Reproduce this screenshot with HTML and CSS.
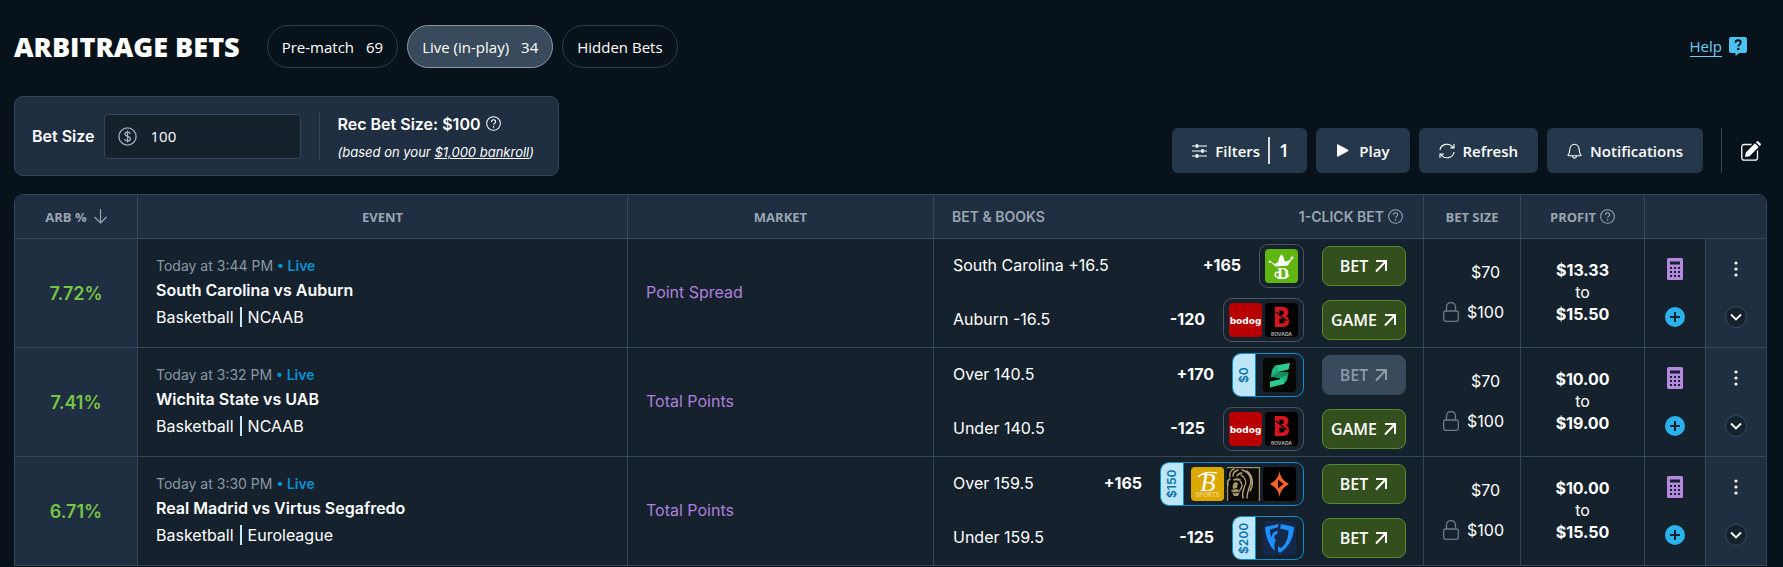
FILE: index.html
```html
<!DOCTYPE html>
<html lang="en">
<head>
    <meta charset="utf-8">
    <title>Arbitrage Bets</title>
    <meta name="viewport" content="width=device-width, initial-scale=1.0">
    <link rel="stylesheet" href="styles.css">
</head>
<body>
    <!-- Shared icons and sportsbook logos -->
    <svg class="sprite" aria-hidden="true">
        <symbol id="i-help" viewBox="0 0 16 16">
            <circle cx="8" cy="8" r="7.3" fill="none" stroke="currentColor" stroke-width="1.1"/>
            <path d="M5.8 6.3c0-3 4.5-2.9 4.5-.2 0 1.7-2.2 1.8-2.2 3.3" fill="none" stroke="currentColor" stroke-width="1.2"/>
            <circle cx="8.1" cy="11.6" r=".85" fill="currentColor"/>
        </symbol>
        <symbol id="i-open" viewBox="0 0 14 14">
            <path d="M2 2h10v10M12 2 2 12.5" fill="none" stroke="currentColor" stroke-width="2"/>
        </symbol>
        <symbol id="i-lock" viewBox="0 0 16 20">
            <rect x=".7" y="9" width="14.6" height="10.3" rx="2" fill="none" stroke="currentColor" stroke-width="1.3"/>
            <path d="M3.5 9V5a4.5 4.5 0 0 1 9 0v4" fill="none" stroke="currentColor" stroke-width="1.3"/>
        </symbol>
        <symbol id="i-calc" viewBox="0 0 16 22">
            <rect width="16" height="22" rx="1.5" fill="#b388dd"/>
            <path d="M3 3.5h10v3H3zM3 9h2v2H3zM7 9h2v2H7zM11 9h2v2h-2zM3 13h2v2H3zM7 13h2v2H7zM11 13h2v2h-2zM3 17h2v2H3zM7 17h2v2H7zM11 17h2v2h-2z" fill="#15222e"/>
        </symbol>
        <symbol id="i-plus" viewBox="0 0 20 20">
            <circle cx="10" cy="10" r="10" fill="#29b2ec"/>
            <path d="M10 5v10M5 10h10" stroke="#15222e" stroke-width="2"/>
        </symbol>
        <symbol id="i-dots" viewBox="0 0 4 16">
            <circle cx="2" cy="2" r="1.6" fill="#fff"/>
            <circle cx="2" cy="8" r="1.6" fill="#fff"/>
            <circle cx="2" cy="14" r="1.6" fill="#fff"/>
        </symbol>
        <symbol id="i-chevron" viewBox="0 0 12 12">
            <path d="m1 3.5 5 5 5-5" fill="none" stroke="#fff" stroke-width="1.8"/>
        </symbol>

        <symbol id="b-draftkings" viewBox="0 0 33 34">
            <rect width="33" height="34" rx="4" fill="#61b510"/>
            <path d="M5 12.5l5 2.5 3-2 1-3.5h4l2.5 3 2.5-.5L27.5 9l-4.500 7.500-12.500 1z" fill="#fff"/>
            <path d="m16.500 5-2.500 4 1 2h3.500l.5-2z" fill="#fff"/>
            <circle cx="5" cy="12.8" r="1.3" fill="#fff"/>
            <circle cx="27" cy="9" r="1.4" fill="#fff"/>
            <text x="18" y="29.500" class="mark-d">D</text>
            <path d="M14 23.500c-4-1.500-5 3-2.500 4.500M12 28c4 2 10 1.500 12-2" fill="none" stroke="#fff" stroke-width="1.5"/>
        </symbol>
        <symbol id="b-bodog" viewBox="0 0 33 34">
            <rect width="33" height="34" rx="4" fill="#b80003"/>
            <text x="16.500" y="20.500" class="mark-bodog">bodog</text>
        </symbol>
        <symbol id="b-bovada" viewBox="0 0 33 34">
            <rect width="33" height="34" rx="4" fill="#000"/>
            <text x="16.500" y="23.500" class="mark-bovada">B</text>
            <path d="m11 9 11 9" stroke="#000" stroke-width="1.2"/>
            <text x="16.500" y="32.500" class="mark-bovada-name">BOVADA</text>
        </symbol>
        <symbol id="b-score" viewBox="0 0 33 34">
            <rect width="33" height="34" rx="4" fill="#050706"/>
            <path d="M12 7.500 27 5l-1.500 6.500-10 2.500z" fill="#2bcb8e"/>
            <path d="m9 12 3-4.500 3.500 6.500 10 .5-1.500 7.500-3.500 4.500-4-6.500-8.500-1z" fill="#1eb57c"/>
            <path d="m7 23.500 13.500-3 .5 5.500-14 3.500z" fill="#2bcb8e"/>
            <path d="m8 18.500 7.500-4.500 10 .5-1 3-8 2z" fill="#158a5e"/>
        </symbol>
        <symbol id="b-borgata" viewBox="0 0 33 34">
            <rect width="33" height="34" rx="4" fill="#dba800"/>
            <text x="17" y="23.500" class="mark-borgata">B</text>
            <path d="M7 10c4-4.500 12-5.500 19-4" fill="none" stroke="#fff" stroke-width="1.3"/>
            <text x="16.500" y="30" class="mark-borgata-name">SPORTS</text>
        </symbol>
        <symbol id="b-mgm" viewBox="0 0 33 34">
            <rect width="33" height="34" rx="2" fill="#0c0a07"/>
            <path d="M0 .6h32.400V34M.6 14v20" fill="none" stroke="#a3916a" stroke-width="1.2"/>
            <!-- face and muzzle -->
            <path d="M6 12c3-1 5-1 8 0l-2 2c-2-1-4-1-5 0zM8 15l3 1-1 5-4 1c-1-3 0-5 2-7zM4 23l6-1 3 2-2 5H7z" fill="#a8966b"/>
            <path d="M5 25c2 1 4 1 7 0" fill="none" stroke="#0c0a07" stroke-width="1"/>
            <!-- mane -->
            <g fill="none" stroke="#b5a378" stroke-width="1.4" stroke-linecap="round">
                <path d="M3 10C2 6 4 3 7 2M6 9c0-3 2-5 5-6M10 9c1-2 3-3 5-3M1 18c-1-3 0-5 2-6"/>
                <path d="M15 3c8 2 11 10 7 18-1 3-2 6-2 10M14 8c5 3 6 8 3 13-1 3-2 6-1 10M20 4c6 5 7 13 3 20M13 14c3 3 2 7 0 9"/>
            </g>
        </symbol>
        <symbol id="b-party" viewBox="0 0 33 34">
            <rect width="33" height="34" rx="4" fill="#000"/>
            <path d="M16.500 4c1 6 3 9 9.500 13-6.500 4-8.500 7-9.500 13-1-6-3-9-9.500-13C13.500 13 15.500 10 16.500 4z" fill="#f2602b"/>
            <path d="m15 12.500 5.500 4.500-5.500 4.500z" fill="#1a0803"/>
        </symbol>
        <symbol id="b-fanduel" viewBox="0 0 33 34">
            <rect width="33" height="34" rx="4" fill="#14284b"/>
            <path d="M2 6 16 3l-1.500 3.500-7.500 2c0 3 .5 6 1.500 8l1.500-5 5-2-1 3.500-2 1-1 3.500 2 1-1.500 3.500V30C6 24 2.500 15 2 6z" fill="#1c90ff"/>
            <path d="m18 3 13 3C30.500 17 26 26 17 32l-2-1.500v-5l3 1.500c5-4 7.500-10 7.500-17.500L17 7.500z" fill="#1c90ff"/>
        </symbol>
    </svg>

    <header class="page-header">
        <h1 class="page-title">ARBITRAGE BETS</h1>
        <nav class="tabs">
            <button class="tab">Pre-match <span>69</span></button>
            <button class="tab active">Live (in-play) <span>34</span></button>
            <button class="tab">Hidden Bets</button>
        </nav>
        <a class="help-link" href="#">
            <span>Help</span>
            <svg width="18" height="19" viewBox="0 0 18 19">
                <path d="M2 0h14a2 2 0 0 1 2 2v12a2 2 0 0 1-2 2h-5.500L6.500 19v-3H2a2 2 0 0 1-2-2V2a2 2 0 0 1 2-2z" fill="#4cc2f1"/>
                <path d="M6.500 5.800c0-3.500 5.200-3.300 5.200-.2 0 2-2.500 2-2.500 4" fill="none" stroke="#08121b" stroke-width="1.8"/>
                <circle cx="9.2" cy="12" r="1.2" fill="#08121b"/>
            </svg>
        </a>
    </header>

    <section class="controls">
        <div class="bet-panel">
            <label class="bet-label" for="bet-size">Bet Size</label>
            <div class="bet-input">
                <svg width="19" height="19" viewBox="0 0 19 19" fill="none" stroke="#a3aeb9" stroke-width="1.3">
                    <circle cx="9.5" cy="9.5" r="8.6"/>
                    <path d="M12.3 6.8c-.5-2.400-5.400-2.200-5.400.2 0 3 5.500 1.700 5.500 4.900 0 2.600-5.400 2.800-5.900.1M9.500 3.500v12"/>
                </svg>
                <input id="bet-size" type="text" value="100">
            </div>
            <div class="rec">
                <div class="rec-title">Rec Bet Size: $100 <svg class="help-icon"><use href="#i-help"/></svg></div>
                <div class="rec-note">(based on your <a href="#">$1,000 bankroll</a>)</div>
            </div>
        </div>

        <div class="toolbar">
            <button class="tool tool-filters">
                <svg width="15" height="14" viewBox="0 0 15 14" stroke="#fff">
                    <path d="M0 2h15M0 7h15M0 12h15"/>
                    <path d="M5 .3v3.400M10.500 5.300v3.400M5 10.300v3.400" stroke-width="2.5"/>
                </svg>
                Filters <span class="tool-count">1</span>
            </button>
            <button class="tool tool-play">
                <svg width="13" height="13" viewBox="0 0 13 13"><path d="M1 1.200Q1 0 2.200.5l9.800 5.300q1 .7 0 1.400l-9.800 5.300Q1 13 1 11.800z" fill="#fff"/></svg>
                Play
            </button>
            <button class="tool">
                <svg width="16" height="16" viewBox="0 0 16 16" fill="none" stroke="#fff" stroke-width="1.1">
                    <path d="M1 7a7 6.500 0 0 1 13-2.500M15 1v4h-4M15 9a7 6.500 0 0 1-13 2.500M1 15v-4h4"/>
                </svg>
                Refresh
            </button>
            <button class="tool">
                <svg width="15" height="16" viewBox="0 0 15 16" fill="none" stroke="#fff" stroke-width="1.1">
                    <path d="M1 12c1.800-1.500 1.700-3.500 1.800-5.500a4.700 5.300 0 0 1 9.400 0c.1 2 0 4 1.800 5.500 0 .6-.4.8-1 .8H2c-.6 0-1-.2-1-.8zM5.500 13.200c.3 2.500 3.700 2.500 4 0"/>
                </svg>
                Notifications
            </button>
            <button class="edit" aria-label="Edit columns">
                <svg width="20" height="20" viewBox="0 0 20 20">
                    <path d="M10.500 3.500H3A2.200 2.200 0 0 0 .8 5.700V17A2.200 2.200 0 0 0 3 19.200h11.300a2.200 2.200 0 0 0 2.200-2.200V9.500" fill="none" stroke="#fff" stroke-width="1.3"/>
                    <path d="m4 16 .8-4.500L14 2.300l3.700 3.700-9.200 9.200zM15 1.300l.8-.8q.8-.8 1.600 0l2.100 2.100q.8.800 0 1.600l-.8.800z" fill="#fff"/>
                </svg>
            </button>
        </div>
    </section>

    <div class="table-wrap">
        <table class="bets">
            <colgroup>
                <col class="col-arb"><col class="col-event"><col class="col-market"><col class="col-books">
                <col class="col-size"><col class="col-profit"><col class="col-calc"><col class="col-more">
            </colgroup>
            <thead>
                <tr>
                    <th>
                        <div class="th-inner">ARB %
                            <svg width="13" height="15" viewBox="0 0 13 15" fill="none" stroke="currentColor" stroke-width="1.2"><path d="M6.500 0v14M.5 8l6 6 6-6"/></svg>
                        </div>
                    </th>
                    <th>EVENT</th>
                    <th>MARKET</th>
                    <th>
                        <div class="th-books">
                            <span>BET &amp; BOOKS</span>
                            <span class="th-inner tight">1-CLICK BET <svg class="help-icon"><use href="#i-help"/></svg></span>
                        </div>
                    </th>
                    <th>BET SIZE</th>
                    <th><div class="th-inner tight">PROFIT <svg class="help-icon"><use href="#i-help"/></svg></div></th>
                    <th colspan="2"></th>
                </tr>
            </thead>
            <tbody>
                <tr>
                    <td class="arb">7.72%</td>
                    <td class="event">
                        <div class="event-time">Today at 3:44 PM <b>• Live</b></div>
                        <div class="event-name">South Carolina vs Auburn</div>
                        <div class="event-league"><span>Basketball</span><span>NCAAB</span></div>
                    </td>
                    <td class="market">Point Spread</td>
                    <td class="books">
                        <div class="line">
                            <span class="pick">South Carolina +16.5</span>
                            <span class="odds">+165</span>
                            <div class="chip"><svg class="book"><use href="#b-draftkings"/></svg></div>
                            <button class="bet-btn">BET <svg><use href="#i-open"/></svg></button>
                        </div>
                        <div class="line">
                            <span class="pick">Auburn -16.5</span>
                            <span class="odds">-120</span>
                            <div class="chip"><svg class="book"><use href="#b-bodog"/></svg><svg class="book"><use href="#b-bovada"/></svg></div>
                            <button class="bet-btn">GAME <svg><use href="#i-open"/></svg></button>
                        </div>
                    </td>
                    <td class="size">
                        <div class="stake">$70</div>
                        <div class="stake locked"><svg class="lock"><use href="#i-lock"/></svg>$100</div>
                    </td>
                    <td class="profit"><b>$13.33</b><span>to</span><b>$15.50</b></td>
                    <td class="actions">
                        <div class="action-stack">
                            <button class="icon-btn" aria-label="Calculator"><svg width="16" height="22"><use href="#i-calc"/></svg></button>
                            <button class="icon-btn" aria-label="Add bet"><svg width="20" height="20"><use href="#i-plus"/></svg></button>
                        </div>
                    </td>
                    <td class="actions more">
                        <div class="action-stack">
                            <button class="icon-btn" aria-label="More"><svg width="4" height="16"><use href="#i-dots"/></svg></button>
                            <button class="icon-btn expand" aria-label="Expand"><svg width="12" height="12"><use href="#i-chevron"/></svg></button>
                        </div>
                    </td>
                </tr>
                <tr>
                    <td class="arb">7.41%</td>
                    <td class="event">
                        <div class="event-time">Today at 3:32 PM <b>• Live</b></div>
                        <div class="event-name">Wichita State vs UAB</div>
                        <div class="event-league"><span>Basketball</span><span>NCAAB</span></div>
                    </td>
                    <td class="market">Total Points</td>
                    <td class="books">
                        <div class="line">
                            <span class="pick">Over 140.5</span>
                            <span class="odds">+170</span>
                            <div class="chip limited"><span class="limit">$0</span><svg class="book"><use href="#b-score"/></svg></div>
                            <button class="bet-btn" disabled>BET <svg><use href="#i-open"/></svg></button>
                        </div>
                        <div class="line">
                            <span class="pick">Under 140.5</span>
                            <span class="odds">-125</span>
                            <div class="chip"><svg class="book"><use href="#b-bodog"/></svg><svg class="book"><use href="#b-bovada"/></svg></div>
                            <button class="bet-btn">GAME <svg><use href="#i-open"/></svg></button>
                        </div>
                    </td>
                    <td class="size">
                        <div class="stake">$70</div>
                        <div class="stake locked"><svg class="lock"><use href="#i-lock"/></svg>$100</div>
                    </td>
                    <td class="profit"><b>$10.00</b><span>to</span><b>$19.00</b></td>
                    <td class="actions">
                        <div class="action-stack">
                            <button class="icon-btn" aria-label="Calculator"><svg width="16" height="22"><use href="#i-calc"/></svg></button>
                            <button class="icon-btn" aria-label="Add bet"><svg width="20" height="20"><use href="#i-plus"/></svg></button>
                        </div>
                    </td>
                    <td class="actions more">
                        <div class="action-stack">
                            <button class="icon-btn" aria-label="More"><svg width="4" height="16"><use href="#i-dots"/></svg></button>
                            <button class="icon-btn expand" aria-label="Expand"><svg width="12" height="12"><use href="#i-chevron"/></svg></button>
                        </div>
                    </td>
                </tr>
                <tr>
                    <td class="arb">6.71%</td>
                    <td class="event">
                        <div class="event-time">Today at 3:30 PM <b>• Live</b></div>
                        <div class="event-name">Real Madrid vs Virtus Segafredo</div>
                        <div class="event-league"><span>Basketball</span><span>Euroleague</span></div>
                    </td>
                    <td class="market">Total Points</td>
                    <td class="books">
                        <div class="line">
                            <span class="pick">Over 159.5</span>
                            <span class="odds">+165</span>
                            <div class="chip limited"><span class="limit">$150</span><svg class="book"><use href="#b-borgata"/></svg><svg class="book"><use href="#b-mgm"/></svg><svg class="book"><use href="#b-party"/></svg></div>
                            <button class="bet-btn">BET <svg><use href="#i-open"/></svg></button>
                        </div>
                        <div class="line">
                            <span class="pick">Under 159.5</span>
                            <span class="odds">-125</span>
                            <div class="chip limited"><span class="limit">$200</span><svg class="book"><use href="#b-fanduel"/></svg></div>
                            <button class="bet-btn">BET <svg><use href="#i-open"/></svg></button>
                        </div>
                    </td>
                    <td class="size">
                        <div class="stake">$70</div>
                        <div class="stake locked"><svg class="lock"><use href="#i-lock"/></svg>$100</div>
                    </td>
                    <td class="profit"><b>$10.00</b><span>to</span><b>$15.50</b></td>
                    <td class="actions">
                        <div class="action-stack">
                            <button class="icon-btn" aria-label="Calculator"><svg width="16" height="22"><use href="#i-calc"/></svg></button>
                            <button class="icon-btn" aria-label="Add bet"><svg width="20" height="20"><use href="#i-plus"/></svg></button>
                        </div>
                    </td>
                    <td class="actions more">
                        <div class="action-stack">
                            <button class="icon-btn" aria-label="More"><svg width="4" height="16"><use href="#i-dots"/></svg></button>
                            <button class="icon-btn expand" aria-label="Expand"><svg width="12" height="12"><use href="#i-chevron"/></svg></button>
                        </div>
                    </td>
                </tr>
            </tbody>
        </table>
    </div>
</body>
</html>
```
FILE: styles.css
```css
:root {
    --bg: #08121b;
    --cell: #15222e;
    --panel: #1f2e40;
    --line: #35485b;
    --muted: #9aa5b1;
    --ui: 'Open Sans', 'Noto Sans', sans-serif;
}

* {
    box-sizing: border-box;
}

body {
    margin: 0;
    padding: 25px 16px 0 14px;
    background: var(--bg);
    color: #fff;
    font-family: Inter, sans-serif;
    font-size: 16px;
}

button {
    font-family: var(--ui);
    color: #fff;
    cursor: pointer;
}

svg {
    display: block;
    flex: none;
}

.sprite {
    display: none;
}

/* Header */
.page-header {
    display: flex;
    align-items: center;
    height: 43px;
}

.page-title {
    margin: 0 27px 0 0;
    font-family: 'Open Sans', sans-serif;
    font-size: 27px;
    font-weight: 800;
    line-height: 32px;
}

.tabs {
    display: flex;
    gap: 9px;
}

.tab {
    display: flex;
    align-items: center;
    gap: 12px;
    height: 43px;
    padding: 0 14px;
    border: 1px solid #2c3d4e;
    border-radius: 22px;
    background: none;
    font-size: 15px;
}

.tab.active {
    background: #384a5b;
    border-color: #8d99a5;
}

.help-link {
    display: flex;
    align-items: center;
    gap: 7px;
    margin-left: auto;
    padding-right: 20px;
    color: #6bcdf4;
    font-family: var(--ui);
    font-size: 15px;
    line-height: 20px;
    text-decoration: none;
}

.help-link span {
    border-bottom: 1px solid #6bcdf4;
}

/* Bet size panel + toolbar */
.controls {
    display: flex;
    align-items: flex-end;
    justify-content: space-between;
    margin: 28px 0 18px;
}

.bet-panel {
    display: flex;
    align-items: center;
    height: 80px;
    padding: 0 24px 0 17px;
    background: var(--panel);
    border: 1px solid var(--line);
    border-radius: 9px;
}

.bet-label {
    margin-right: 9px;
    font-weight: 600;
}

.bet-input {
    display: flex;
    align-items: center;
    gap: 14px;
    width: 197px;
    height: 45px;
    padding: 0 13px;
    background: var(--cell);
    border: 1px solid var(--line);
    border-radius: 4px;
}

.bet-input input {
    width: 100%;
    min-width: 0;
    padding: 0;
    border: 0;
    outline: 0;
    background: none;
    color: #fff;
    font-family: var(--ui);
    font-size: 15px;
}

.rec {
    margin-left: 18px;
    padding-left: 18px;
    border-left: 1px solid var(--line);
}

.rec-title {
    display: flex;
    align-items: center;
    gap: 6px;
    height: 25px;
    font-weight: 600;
}

.rec-note {
    height: 25px;
    font-size: 13px;
    line-height: 32px;
    font-style: italic;
}

.rec-note a {
    color: inherit;
}

.help-icon {
    width: 15px;
    height: 15px;
}

.toolbar {
    display: flex;
    gap: 9px;
    padding-bottom: 3px;
}

.tool {
    display: flex;
    align-items: center;
    gap: 8px;
    height: 45px;
    padding: 0 20px;
    border: 0;
    border-radius: 6px;
    background: #25384b;
    font-size: 15px;
    font-weight: 600;
}

.tool-filters {
    padding-right: 18px;
}

.tool-play {
    gap: 10px;
}

.tool-count {
    padding-left: 9px;
    border-left: 2px solid #d5dbe0;
    font-size: 18px;
    line-height: 27px;
}

.edit {
    margin-left: 9px;
    padding: 0 6px 0 19px;
    border: 0;
    border-left: 1px solid var(--line);
    background: none;
}

/* Table */
.table-wrap {
    border: 1px solid var(--line);
    border-bottom: 0;
    border-radius: 9px 9px 0 0;
    overflow: hidden;
}

.bets {
    width: 100%;
    table-layout: fixed;
    border-collapse: separate;
    border-spacing: 0;
}

.col-arb { width: 123px; }
.col-market { width: 306px; }
.col-books { width: 490px; }
.col-size { width: 97px; }
.col-profit { width: 124px; }
.col-calc { width: 61px; }
.col-more { width: 60px; }

.bets th,
.bets td {
    padding: 0;
    border-right: 1px solid var(--line);
    border-bottom: 1px solid var(--line);
}

.bets th:last-child,
.bets td:last-child {
    border-right: 0;
}

.bets th {
    height: 44px;
    background: var(--panel);
    color: var(--muted);
    font-family: var(--ui);
    font-size: 13px;
    font-weight: 700;
}

.bets td {
    height: 109px;
    background: var(--cell);
}

.th-inner {
    display: flex;
    align-items: center;
    justify-content: center;
    gap: 7px;
}

.th-inner.tight {
    gap: 4px;
}

.th-books {
    display: flex;
    justify-content: space-between;
    padding: 0 20px 0 18px;
    font-family: Inter, sans-serif;
    font-size: 14px;
    font-weight: 600;
}

.bets .arb {
    background: var(--panel);
    color: #76c545;
    font-size: 18px;
    font-weight: 600;
    text-align: center;
}

.bets .event {
    padding-left: 18px;
}

.event-time {
    color: #8a97a4;
    font-size: 14px;
    line-height: 22px;
}

.event-time b {
    color: #0790d0;
    font-weight: 600;
}

.event-name {
    font-weight: 600;
    line-height: 26px;
}

.event-league {
    display: flex;
    line-height: 20px;
    padding: 4px 0;
}

.event-league span + span {
    margin-left: 6px;
    padding-left: 6px;
    border-left: 2px solid #c4eafa;
}

.bets .market {
    padding: 0 0 2px 18px;
    color: #b07fdc;
}

.line {
    display: flex;
    align-items: center;
    height: 44px;
    padding: 0 17px 0 19px;
}

.line + .line {
    margin-top: 10px;
}

.pick,
.odds {
    padding-bottom: 2px;
}

.pick {
    flex: 1;
}

.odds {
    margin-right: 18px;
    font-weight: 700;
}

.chip {
    display: flex;
    align-items: center;
    gap: 3px;
    height: 44px;
    margin-right: 18px;
    padding: 0 5px;
    border: 1px solid #465667;
    border-radius: 9px;
    overflow: hidden;
}

.chip.limited {
    padding: 0 7px 0 0;
    border-color: #0790d0;
}

.limit {
    width: 23px;
    height: 42px;
    margin-right: 4px;
    border-left: 1px solid #0790d0;
    background: #bde6f8;
    color: #0b74a5;
    font-size: 12px;
    font-weight: 600;
    line-height: 22px;
    text-align: center;
    writing-mode: vertical-rl;
    transform: rotate(180deg);
}

.book {
    width: 33px;
    height: 34px;
}

.bet-btn {
    display: flex;
    align-items: center;
    justify-content: center;
    gap: 6px;
    width: 84px;
    height: 40px;
    padding: 0;
    border: 1px solid #56892b;
    border-radius: 8px;
    background: #334f1d;
    font-size: 16px;
    font-weight: 600;
}

.bet-btn svg {
    width: 14px;
    height: 14px;
}

.bet-btn:disabled {
    border-color: #384a5b;
    background: #384a5b;
    color: #8f9ba7;
}

.bets .size,
.bets .profit {
    padding-bottom: 2px;
}

.stake {
    display: flex;
    align-items: center;
    justify-content: center;
    height: 40px;
    padding-left: 27px;
}

.stake.locked {
    gap: 8px;
    padding-left: 3px;
}

.lock {
    width: 16px;
    height: 20px;
    color: #6b7a8a;
}

.profit {
    text-align: center;
    line-height: 22px;
}

.profit b,
.profit span {
    display: block;
}

.action-stack {
    display: flex;
    flex-direction: column;
    align-items: center;
    gap: 26px;
}

.icon-btn {
    display: flex;
    align-items: center;
    justify-content: center;
    height: 22px;
    padding: 0;
    border: 0;
    background: none;
}

.bets .more {
    background: var(--panel);
}

.expand {
    width: 22px;
    border: 1px solid #384a5b;
    border-radius: 50%;
    background: #15222e;
}

/* Lettering inside the sportsbook logos */
.mark-d,
.mark-bodog,
.mark-bovada,
.mark-bovada-name,
.mark-borgata,
.mark-borgata-name {
    fill: #fff;
    text-anchor: middle;
}

.mark-d {
    font: 700 16px 'Liberation Serif', serif;
}

.mark-bodog {
    font: 700 9px 'DejaVu Sans', sans-serif;
}

.mark-bovada {
    fill: #d8141c;
    font: 700 26px 'DejaVu Sans Condensed', 'Liberation Sans', sans-serif;
}

.mark-bovada-name {
    fill: #aaa;
    font: 700 5px Inter, sans-serif;
}

.mark-borgata {
    font: italic 400 25px 'Liberation Serif', serif;
}

.mark-borgata-name {
    fill: #f4d47c;
    font: 600 6px Inter, sans-serif;
}
```
